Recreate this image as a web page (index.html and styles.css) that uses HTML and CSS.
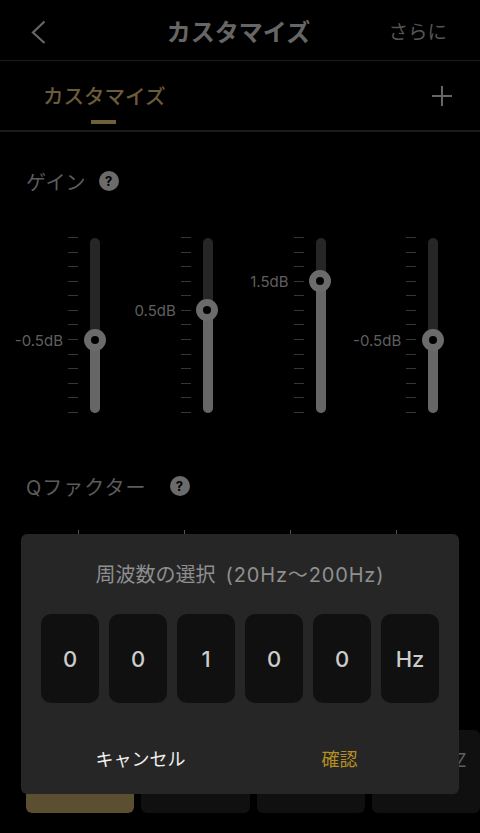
FILE: index.html
```html
<!DOCTYPE html>
<html>
<head>
    <title>カスタマイズ</title>
    <link rel="stylesheet" href="styles.css">
</head>
<body>

    <div class="page">
        <div class="header">
            <svg class="back" width="16" height="26" viewBox="0 0 16 26"><path d="M14.5 2.5 L3 13.5 L14.5 24" fill="none" stroke="#666" stroke-width="2.2"/></svg>
            <h1>カスタマイズ</h1>
            <span class="more">さらに</span>
        </div>

        <div class="tabs">
            <div class="tab">カスタマイズ</div>
            <svg class="plus" width="20" height="20" viewBox="0 0 20 20"><path d="M10 0 V20 M0 10 H20" fill="none" stroke="#666" stroke-width="2"/></svg>
        </div>

        <div class="section-title gain-title">
            <span>ゲイン</span>
            <span class="help">?</span>
        </div>

        <div class="sliders">
            <div class="slider-col">
                <div class="ticks"><i></i><i></i><i></i><i></i><i></i><i></i><i></i><i></i><i></i><i></i><i></i><i></i><i></i></div>
                <div class="track">
                    <div class="fill" style="height: 41.67%"></div>
                    <div class="knob" style="top: 58.33%"><span class="value">-0.5dB</span></div>
                </div>
            </div>
            <div class="slider-col">
                <div class="ticks"><i></i><i></i><i></i><i></i><i></i><i></i><i></i><i></i><i></i><i></i><i></i><i></i><i></i></div>
                <div class="track">
                    <div class="fill" style="height: 58.33%"></div>
                    <div class="knob" style="top: 41.67%"><span class="value">0.5dB</span></div>
                </div>
            </div>
            <div class="slider-col">
                <div class="ticks"><i></i><i></i><i></i><i></i><i></i><i></i><i></i><i></i><i></i><i></i><i></i><i></i><i></i></div>
                <div class="track">
                    <div class="fill" style="height: 75%"></div>
                    <div class="knob" style="top: 25%"><span class="value">1.5dB</span></div>
                </div>
            </div>
            <div class="slider-col">
                <div class="ticks"><i></i><i></i><i></i><i></i><i></i><i></i><i></i><i></i><i></i><i></i><i></i><i></i><i></i></div>
                <div class="track">
                    <div class="fill" style="height: 41.67%"></div>
                    <div class="knob" style="top: 58.33%"><span class="value">-0.5dB</span></div>
                </div>
            </div>
        </div>

        <div class="section-title q-title">
            <span>Qファクター</span>
            <span class="help">?</span>
        </div>

        <div class="q-ticks"><i></i><i></i><i></i><i></i></div>

        <div class="freq-buttons">
            <div class="freq-button active"></div>
            <div class="freq-button"></div>
            <div class="freq-button"></div>
            <div class="freq-button">16000HZ</div>
        </div>
    </div>

    <div class="dialog">
        <div class="dialog-title">周波数の選択<span class="range">(20Hz～200Hz)</span></div>
        <div class="digits">
            <div class="digit">0</div>
            <div class="digit">0</div>
            <div class="digit">1</div>
            <div class="digit">0</div>
            <div class="digit">0</div>
            <div class="digit">Hz</div>
        </div>
        <div class="dialog-actions">
            <span class="cancel">キャンセル</span>
            <span class="confirm">確認</span>
        </div>
    </div>

</body>
</html>
```

FILE: styles.css
```css
body {
    font-family: Inter, "Noto Sans CJK JP", sans-serif;
    background-color: #000;
    margin: 0;
    width: 480px;
    height: 833px;
    overflow: hidden;
    position: relative;
}

.header {
    height: 60px;
    border-bottom: 1px solid #1b1b1b;
    display: grid;
    grid-template-columns: 1fr auto 1fr;
    align-items: center;
    padding: 0 33px 0 30px;
}

.back {
    display: block;
    margin-top: 4px;
}

.header h1 {
    margin: 0;
    font-size: 24px;
    font-weight: 700;
    color: #666;
}

.more {
    justify-self: end;
    font-size: 19.5px;
    color: #555;
}

.tabs {
    height: 69px;
    border-bottom: 2px solid #1b1b1b;
    display: flex;
    justify-content: space-between;
    align-items: center;
    padding: 0 28px 0 43px;
}

.tab {
    position: relative;
    height: 69px;
    line-height: 71px;
    font-size: 20.5px;
    font-weight: 500;
    color: #6d5c3a;
}

.tab::after {
    content: "";
    position: absolute;
    left: 48px;
    bottom: 6px;
    width: 25px;
    height: 4px;
    background-color: #6f5f3c;
}

.section-title {
    display: flex;
    align-items: center;
    height: 24px;
    padding-left: 26px;
    font-size: 20px;
    color: #5c5c5c;
}

.gain-title {
    margin-top: 37px;
    gap: 13px;
}

.q-title {
    margin-top: 61px;
    gap: 23px;
}

.q-title span:first-child {
    letter-spacing: 1px;
}

.help {
    width: 20px;
    height: 20px;
    border-radius: 50%;
    background-color: #6b6b6b;
    color: #000;
    font-size: 13px;
    font-weight: 700;
    text-align: center;
    line-height: 20px;
}

.sliders {
    display: grid;
    grid-template-columns: repeat(4, 1fr);
    width: 451px;
    margin-top: 44px;
}

.slider-col {
    display: flex;
    gap: 12px;
    padding-left: 68px;
}

.ticks {
    display: flex;
    flex-direction: column;
    justify-content: space-between;
    height: 176px;
    width: 10px;
}

.ticks i {
    display: block;
    height: 1px;
    background-color: #363636;
}

.track {
    position: relative;
    width: 10px;
    height: 175px;
    margin-top: 1px;
    border-radius: 5px;
    background-color: #262626;
}

.fill {
    position: absolute;
    left: 0;
    bottom: 0;
    width: 100%;
    border-radius: 0 0 5px 5px;
    background-color: #666;
}

.knob {
    position: absolute;
    left: 50%;
    width: 8px;
    height: 8px;
    margin: -11.5px 0 0 -11.5px;
    border: 7.5px solid #6b6b6b;
    border-radius: 50%;
    background-color: #000;
}

.value {
    position: absolute;
    right: 35.5px;
    top: calc(50% + 1px);
    transform: translateY(-50%);
    font-size: 15px;
    line-height: 18px;
    color: #5f5f5f;
    white-space: nowrap;
}

.q-ticks {
    display: flex;
    gap: 105px;
    height: 5px;
    margin-top: 32px;
    padding-left: 78px;
}

.q-ticks i {
    display: block;
    width: 1px;
    height: 5px;
    background-color: #555;
}

.freq-buttons {
    display: grid;
    grid-template-columns: repeat(4, 1fr);
    gap: 7px;
    margin-top: 195px;
    padding-left: 26px;
}

.freq-button {
    height: 83px;
    line-height: 62px;
    border-radius: 6px;
    background-color: #101010;
    color: #5f5f5f;
    font-size: 18px;
    letter-spacing: 0.8px;
    text-align: center;
}

.freq-button.active {
    background-color: #5c4e31;
}

/* overlay */
.dialog {
    position: absolute;
    left: 21px;
    top: 534px;
    width: 438px;
    height: 260px;
    box-sizing: border-box;
    padding: 0 20px;
    border-radius: 6px;
    background-color: #262626;
}

.dialog-title {
    margin-top: 27px;
    height: 28px;
    line-height: 28px;
    font-size: 20px;
    color: #8f8f8f;
    text-align: center;
    white-space: nowrap;
}

.range {
    margin-left: 10px;
    letter-spacing: 0.85px;
}

.digits {
    display: grid;
    grid-template-columns: repeat(6, 1fr);
    gap: 10px;
    margin-top: 25px;
}

.digit {
    height: 89px;
    line-height: 91px;
    border-radius: 10px;
    background-color: #101010;
    color: #ccc;
    font-size: 22px;
    font-weight: 500;
    text-align: center;
}

.dialog-actions {
    display: grid;
    grid-template-columns: 1fr 1fr;
    margin-top: 43px;
    font-size: 18px;
    line-height: 28px;
    text-align: center;
}

.cancel {
    color: #eee;
}

.confirm {
    color: #b58f1f;
}
```
